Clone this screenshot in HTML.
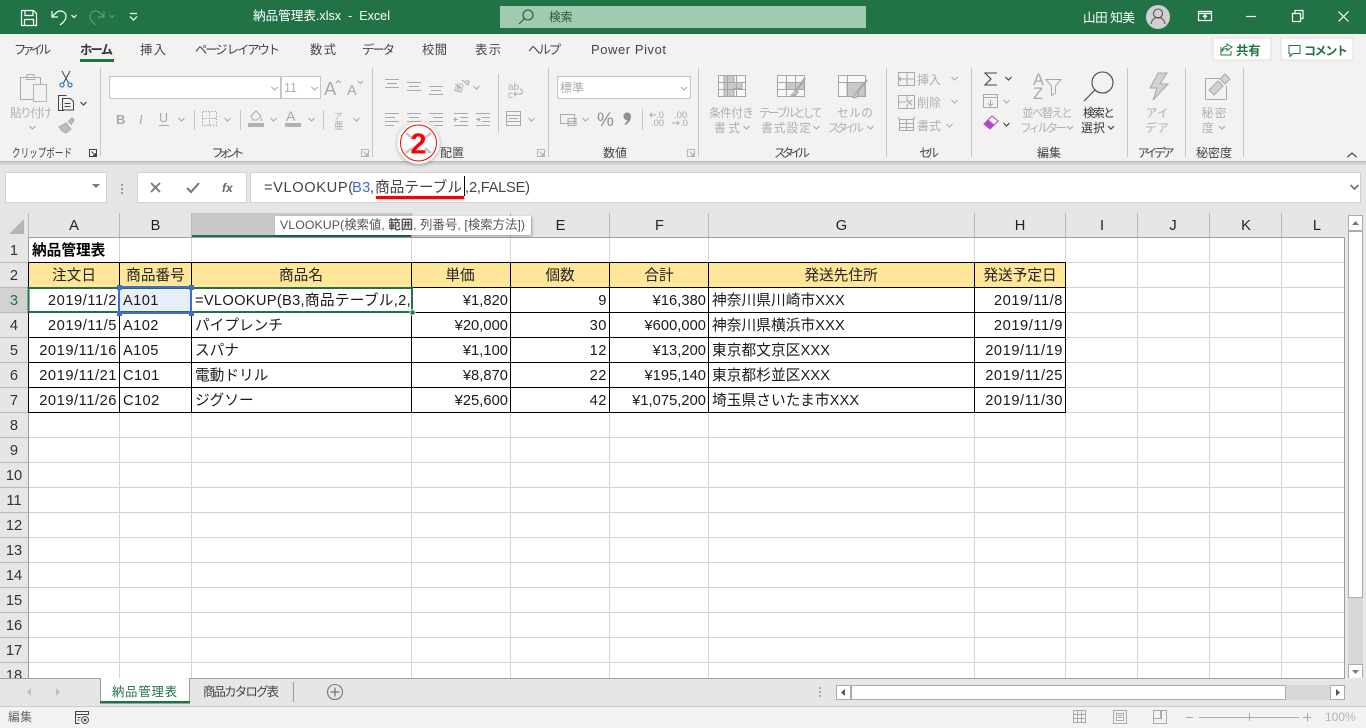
<!DOCTYPE html>
<html lang="ja"><head><meta charset="utf-8"><title>納品管理表.xlsx - Excel</title>
<style>
html,body{margin:0;padding:0;width:1366px;height:728px;overflow:hidden;background:#e6e6e6}
svg{display:block;position:absolute;left:0;top:0}
text{font-family:"Liberation Sans","Noto Sans CJK JP",sans-serif;white-space:pre}
.c{font-size:14.67px;fill:#1a1a1a}
.n{font-size:14.67px;fill:#1a1a1a;text-anchor:end;letter-spacing:.55px}
.m{font-size:14.67px;fill:#1a1a1a;text-anchor:end;letter-spacing:.05px}
.h{font-size:14.67px;fill:#222;text-anchor:middle}
.r{font-size:14.67px;fill:#333;text-anchor:middle}
.t{font-size:12.3px;fill:#444}
.g{font-size:12px;fill:#444;text-anchor:middle}
.d{font-size:11.7px;fill:#b0b0b0}
.dm{font-size:11.7px;fill:#b0b0b0;text-anchor:middle}
.i{fill:none;stroke:#a9a9a9;stroke-width:1}
.k{fill:none;stroke:#444;stroke-width:1}
.w{fill:none;stroke:#fff;stroke-width:1.2}
.ch{fill:none;stroke:#a9a9a9;stroke-width:1.1}
.chd{fill:none;stroke:#444;stroke-width:1.2}
</style></head><body>
<svg width="1366" height="728" viewBox="0 0 1366 728" xmlns="http://www.w3.org/2000/svg">
<defs>
<filter id="sh" x="-10%" y="-30%" width="120%" height="170%"><feDropShadow dx="1" dy="1" stdDeviation="1.2" flood-color="#000" flood-opacity=".35"/></filter>
<filter id="sh2" x="-30%" y="-30%" width="160%" height="160%"><feDropShadow dx="0" dy="1" stdDeviation="2" flood-color="#000" flood-opacity=".3"/></filter>
<linearGradient id="rs" x1="0" y1="0" x2="0" y2="1"><stop offset="0" stop-color="#bdbdbd"/><stop offset="1" stop-color="#e6e6e6"/></linearGradient>
</defs>
<!-- backgrounds -->
<rect width="1366" height="728" fill="#e6e6e6"/>
<rect width="1366" height="34" fill="#217346"/>
<rect y="34" width="1366" height="127" fill="#f3f2f1"/>
<rect y="161" width="1366" height="5" fill="url(#rs)"/>
<!-- title bar -->
<g class="w" fill="none" stroke="#fff">
<path class="w" d="M21.5 10.5h12l3 3v12h-15zM25 10.5v5h8v-5M24.5 25.5v-6h9v6"/>
<path class="w" stroke-width="1.3" d="M52 11v6h6M52 16.5l5-4.5c4-2.5 9 0 9 4.500 0 3.500-2.500 6-6 8.500"/>
<path class="w" d="M71.500 15l2.500 2.500 2.500-2.500"/>
</g>
<g fill="none" stroke="#5d9a79" stroke-width="1.2"><path d="M104 11v6h-6M104 16.500l-5-4.500c-4-2.500-9 0-9 4.500 0 3.500 2.500 6 6 8.500"/><path d="M109.500 15l2.500 2.500 2.500-2.500"/></g>
<path class="w" d="M130 13.500h7M130 16.500l3.500 3.500 3.500-3.500"/>
<text x="253" y="20" font-size="12.6" fill="#fff" textLength="137" lengthAdjust="spacing">納品管理表.xlsx  -  Excel</text>
<rect x="500" y="6" width="366" height="22" fill="#a0cbb1"/>
<g fill="none" stroke="#1e5c39" stroke-width="1.1"><circle cx="528" cy="15" r="5"/><path d="M524.500 18.500l-5.500 5.500"/></g>
<text x="549" y="21" font-size="11.700" fill="#1e5c39">検索</text>
<text x="1083" y="22" font-size="12.600" fill="#fff" textLength="52">山田 知美</text>
<circle cx="1158" cy="17" r="12" fill="#d0d0d0"/>
<g fill="none" stroke="#555" stroke-width="1.1"><circle cx="1158" cy="13.500" r="4.500"/><path d="M1151 24c1-5 3.500-6.500 7-6.500s6 1.500 7 6.500"/></g>
<path class="w" d="M1198.500 11.500h13v9h-13zM1198.500 13.500h13M1205 19v-4M1203 17l2-2 2 2"/>
<path class="w" d="M1246 16.500h10"/>
<path class="w" d="M1292.500 13.500h8v8h-8zM1295 13v-2.500h8v8h-2.500"/>
<path class="w" d="M1338.500 11.500l10 10M1348.500 11.500l-10 10"/>
<!-- tabs -->
<text class="t" x="14" y="54" textLength="37">ファイル</text>
<text class="t" x="80" y="54" textLength="33" font-weight="700" style="fill:#333">ホーム</text>
<rect x="80" y="59" width="34" height="3" fill="#217346"/>
<text class="t" x="140" y="54" textLength="26">挿入</text>
<text class="t" x="195" y="54" textLength="85">ページ レイアウト</text>
<text class="t" x="310" y="54" textLength="26">数式</text>
<text class="t" x="362" y="54" textLength="33">データ</text>
<text class="t" x="422" y="54" textLength="25">校閲</text>
<text class="t" x="475" y="54" textLength="26">表示</text>
<text class="t" x="528" y="54" textLength="33">ヘルプ</text>
<text class="t" x="591" y="54" textLength="75" style="font-size:13px">Power Pivot</text>
<!-- share/comment -->
<rect x="1213" y="38" width="58" height="22" fill="#fff" stroke="#e1dfdd"/>
<path d="M1221 47v8h10v-4M1227 44l5 3-5 3.500v-2c-2.500 0-4 1-5 3 0-3 2-5 5-5.500z" fill="none" stroke="#217346"/>
<text x="1236" y="55" font-size="12.300" font-weight="700" fill="#217346">共有</text>
<rect x="1281" y="38" width="72" height="22" fill="#fff" stroke="#e1dfdd"/>
<path d="M1289 45.500h11v8h-7l-3 3v-3h-1z" fill="none" stroke="#217346"/>
<text x="1304" y="55" font-size="12" font-weight="700" fill="#217346" textLength="44">コメント</text>
<!-- group separators -->
<g stroke="#c8c6c4"><path d="M100.500 68v89M372.500 68v89M548.500 68v89M698.500 68v89M886.500 68v89M971.500 68v89M1127.500 68v89M1185.500 68v89M1243.500 68v89M498.500 74v59M642.500 109v21M194.500 110v20M240.500 110v20M323.500 110v20"/></g>
<!-- clipboard -->
<g class="i" fill="none" stroke="#b4b4b4"><path class="i" d="M20.500 77.500h20v22h-20zM27 77.500v-3h7v3M25.500 79.500h10" /><rect x="33.500" y="84.500" width="13" height="17" fill="#f3f2f1" stroke="#b4b4b4"/></g>
<text class="d" x="10" y="117" textLength="42">貼り付け</text>
<path class="ch" d="M29.500 126l3 3 3-3"/>
<g fill="none" stroke="#444" stroke-width="1"><path d="M62 71l6.500 12M70 71l-6.500 12"/></g>
<circle cx="62" cy="85" r="2" fill="none" stroke="#2b88d8" stroke-width="1.300"/><circle cx="70" cy="85" r="2" fill="none" stroke="#2b88d8" stroke-width="1.300"/>
<g class="k"><path class="k" d="M64 110.500h-5.500v-15h8M62.500 98.500h8l3 3v8.500h-11zM64.500 103.500h6M64.500 106.500h6"/></g>
<path class="chd" d="M80.500 102l3 3 3-3"/>
<path d="M59 127l7-4 5 6-5 4c-2-.5-5-3-7-6zM68 122l4-4 2 2-3 5" fill="#bdbdbd" stroke="#a6a6a6"/>
<text class="g" x="42" y="157" textLength="60" lengthAdjust="spacingAndGlyphs" transform="translate(0 0)" text-anchor="middle">クリップボード</text>
<path class="k" stroke="#555" d="M89.500 149.500h7v7h-7zM91.500 151.500l4 4M95.500 153v2.500h-2.500"/>
<!-- font -->
<rect x="109.500" y="76.500" width="171" height="22" fill="#fff" stroke="#c6c6c6"/>
<rect x="281.500" y="76.500" width="39" height="22" fill="#fff" stroke="#c6c6c6"/>
<text class="d" x="284" y="92" style="font-size:12.500px">11</text>
<path class="ch" d="M271.500 87l3 3 3-3M311.500 87l3 3 3-3"/>
<text x="324" y="95" font-size="18.500" fill="#a9a9a9">A</text><path class="ch" d="M336 83l2.500-2.500 2.500 2.500"/>
<text x="347" y="95" font-size="14.500" fill="#a9a9a9">A</text><path class="ch" d="M358 81l2.500 2.500 2.500-2.500"/>
<text x="116" y="124" font-size="13" font-weight="700" fill="#a9a9a9">B</text>
<text x="139" y="124" font-size="13" font-style="italic" fill="#a9a9a9" font-family="Liberation Serif">I</text>
<text x="159" y="122" font-size="12.500" fill="#a9a9a9">U</text><path class="i" d="M159 125.500h10"/>
<path class="ch" d="M178.500 118l3 3 3-3M224.500 118l3 3 3-3M270.500 118l3 3 3-3M308.500 118l3 3 3-3M353.500 118l3 3 3-3"/>
<path class="i" stroke-dasharray="1.500 1.500" d="M202.500 111.500h14v14h-14zM209.500 111.500v14M202.500 118.500h14"/>
<path d="M251 116l5-5 5 5-4 4h-4zM261 118l1 3" fill="none" stroke="#a9a9a9"/><rect x="248" y="123" width="16" height="4" fill="#b3b0ad"/>
<text x="286" y="121" font-size="14" fill="#a9a9a9">A</text><rect x="285" y="123" width="16" height="4" fill="#b3b0ad"/>
<text x="334" y="119" font-size="8.500" fill="#a9a9a9">ア</text><text x="334" y="129" font-size="9.500" fill="#a9a9a9">亜</text>
<text class="g" x="228" y="157" textLength="33">フォント</text>
<path d="M361.500 149.500h7v7h-7zM363.500 151.500l4 4M367.500 153v2.500h-2.500" fill="none" stroke="#b5b5b5"/>
<!-- alignment -->
<path class="i" d="M385 79.500h14M387 83.500h10M385 87.500h14M407 82.500h14M409 86.500h10M407 90.500h14M429 86.500h14M431 90.500h10M429 94.500h14"/>
<path class="i" d="M455 84l8 6M462 80l6 5 1-4-4 0M454 90l8 2"/>
<text class="d" x="453" y="90" style="font-size:9px" transform="rotate(-35 458 86)">ab</text>
<path class="ch" d="M473.500 86l3 3 3-3"/>
<path class="i" d="M385 113.500h14M385 117.500h10M385 121.500h14M385 125.500h9M407 113.500h14M409 117.500h10M407 121.500h14M409 125.500h10M429 113.500h14M433 117.500h10M429 121.500h14M434 125.500h9M454 113.500h14M460 117.500h8M460 121.500h8M454 125.500h14M458 119.500h-4M456 117.500l-2 2 2 2M476 113.500h14M482 117.500h8M482 121.500h8M476 125.500h14M476 119.500h4M478 117.500l2 2-2 2"/>
<text class="d" x="508" y="90" style="font-size:10px">ab</text>
<text class="d" x="508" y="98" style="font-size:10px">c</text><path class="i" d="M514 94h6c3 0 3-4 0-5M514 94l2-2M514 94l2 2"/>
<path class="i" d="M506.500 111.500h14v14h-14zM506.500 115.500h14M506.500 121.500h14M509 118.500h9"/>
<path class="ch" d="M528.500 118l3 3 3-3"/>
<text class="g" x="452" y="157">配置</text>
<path d="M537.500 149.500h7v7h-7zM539.500 151.500l4 4M543.500 153v2.500h-2.500" fill="none" stroke="#b5b5b5"/>
<!-- number -->
<rect x="557.500" y="76.500" width="133" height="22" fill="#fff" stroke="#c6c6c6"/>
<text class="d" x="560" y="92" style="font-size:12px;fill:#a9a9a9">標準</text>
<path class="ch" d="M681 87l3 3 3-3"/>
<path class="i" d="M560.500 114.500h14v9h-14zM568 118.500h8v7h-8zM568 121.500h8"/>
<path class="ch" d="M582.500 118l3 3 3-3"/>
<text x="597" y="126" font-size="19" fill="#909090">%</text>
<path d="M627 112.500c2.500 0 4 1.700 4 4 0 3.500-2.500 6.500-5.500 8.500l-1-1c1.500-1.300 2.500-2.700 2.800-4-2 .2-3.800-1.400-3.800-3.600 0-2.200 1.500-3.900 3.500-3.900z" fill="#909090"/>
<text x="656" y="118" font-size="9.500" fill="#a9a9a9">.0</text><text x="651" y="126" font-size="9.500" fill="#a9a9a9">.00</text><path class="i" d="M656 115h-6M652 113l-2 2 2 2"/>
<text x="674" y="118" font-size="9.500" fill="#a9a9a9">.00</text><text x="680" y="126" font-size="9.500" fill="#a9a9a9">.0</text><path class="i" d="M672 123h7M677 121l2 2-2 2"/>
<text class="g" x="615" y="157">数値</text>
<path d="M687.500 149.500h7v7h-7zM689.500 151.500l4 4M693.500 153v2.500h-2.500" fill="none" stroke="#b5b5b5"/>
<!-- styles -->
<g fill="none" stroke="#a6a6a6"><rect x="718.500" y="75.500" width="27" height="21" fill="#f8f8f8"/><path fill="#c8c8c8" d="M724 75.500h10v7h8v6h-8v8h-10z"/><path d="M718.500 82.500h27M718.500 89.500h27M727.500 75.500v21M736.500 75.500v21"/></g>
<g fill="none" stroke="#a6a6a6"><rect x="777.500" y="75.500" width="27" height="21" fill="#f8f8f8"/><path fill="#c8c8c8" d="M786 82.500h18v7h-18z"/><path d="M777.500 82.500h27M777.500 89.500h27M786.500 75.500v21M795.500 75.500v21"/><path stroke-width="2" d="M805 78l-9 13"/><path fill="#c8c8c8" d="M791 95c3-1 4-4 4-5l3 2c-1 3-4 5-7 3z"/></g>
<g fill="none" stroke="#a6a6a6"><rect x="838.500" y="75.500" width="27" height="21" fill="#f8f8f8"/><path fill="#c8c8c8" d="M847 82.500h18v14h-18z"/><path d="M838.500 82.500h27M847.500 75.500v21"/><path stroke-width="2" d="M867 80l-10 12"/><path fill="#c8c8c8" d="M852 97c3-1 4-4 4-5l3 2c-1 3-4 5-7 3z"/></g>
<text class="d" x="709" y="117" textLength="45">条件付き</text>
<text class="d" x="714" y="132" textLength="26">書式</text><path class="ch" d="M743.500 126l3 3 3-3"/>
<text class="d" x="759" y="117" textLength="64">テーブルとして</text>
<text class="d" x="761" y="132" textLength="50">書式設定</text><path class="ch" d="M813.500 126l3 3 3-3"/>
<text class="d" x="837" y="117" textLength="36">セルの</text>
<text class="d" x="828" y="132" textLength="36">スタイル</text><path class="ch" d="M867.500 126l3 3 3-3"/>
<text class="g" x="792" y="157" textLength="36">スタイル</text>
<!-- cells -->
<path class="i" d="M898.500 72.500h16v13h-16zM898.500 79h16M907 72.500v13M903 79h-4M901 77l-2 2 2 2"/>
<text class="d" x="917" y="84" style="font-size:12px">挿入</text>
<path class="ch" d="M951.500 77l3 3 3-3"/>
<path class="i" d="M898.500 95.500h16v13h-16zM898.500 102h8M907 95.500v6M907 108.500v-4M907 100l5 5M912 100l-5 5"/>
<text class="d" x="917" y="107" style="font-size:12px">削除</text>
<path class="ch" d="M951.500 100l3 3 3-3"/>
<path class="i" d="M899.500 119.500h14v11h-14zM899.500 123.500h14M899.500 127.500h14M906.500 119.500v11M899 116.500v3M914 116.500v3"/>
<text class="d" x="917" y="130" style="font-size:12px">書式</text>
<path class="ch" d="M946.500 124l3 3 3-3"/>
<text class="g" x="929" y="157" textLength="20">セル</text>
<!-- editing -->
<path fill="none" stroke="#444" stroke-width="1.100" d="M997 73h-12l6 6-6 6h12"/>
<path class="chd" d="M1005.500 77l3 3 3-3"/>
<path class="i" d="M983.500 94.500h14v13h-14zM983.500 97.500h14M990.500 100v6M988 103.500l2.500 2.500 2.500-2.500"/>
<path class="ch" d="M1003.500 100l3 3 3-3"/>
<path d="M984 124l8-8 6 5-8 8z" fill="#b146c2" stroke="#b146c2"/><path d="M988 120l4-4 6 5-4 4z" fill="#fff" stroke="#b146c2"/>
<path class="chd" d="M1003.500 123l3 3 3-3"/>
<text x="1033" y="85" font-size="16.500" fill="#a9a9a9">A</text><text x="1033" y="99" font-size="16.500" fill="#a9a9a9">Z</text>
<path class="i" d="M1046 79.500h15l-5.500 6.500v7l-4 2.500v-9.500z"/>
<text class="d" x="1022" y="117" textLength="51">並べ替えと</text>
<text class="d" x="1020" y="132" textLength="47">フィルター</text><path class="ch" d="M1067 126l3 3 3-3"/>
<g fill="none" stroke="#444" stroke-width="1.100"><circle cx="1102.500" cy="82.500" r="10.500"/><path d="M1095 90l-11 11"/></g>
<text x="1083" y="117" font-size="11.700" fill="#333" textLength="32">検索と</text>
<text x="1081" y="132" font-size="11.700" fill="#333" textLength="24">選択</text><path class="chd" d="M1108 126l3 3 3-3"/>
<text class="g" x="1049" y="157">編集</text>
<!-- ideas -->
<path d="M1158 73h9l-7 11h8l-15 16 4-12h-7z" fill="#d2d2d2" stroke="#a9a9a9"/>
<text class="dm" x="1157" y="117">アイ</text><text class="dm" x="1157" y="132">デア</text>
<text class="g" x="1156" y="157" textLength="37">アイデア</text>
<!-- sensitivity -->
<path class="i" d="M1205.500 78.500h14M1205.500 78.500v21h21v-14"/>
<path d="M1209 90l9-9 5 5-9 9z" fill="#d2d2d2" stroke="#a9a9a9"/><path d="M1220 79l5-5 5 5-5 5z" fill="#d2d2d2" stroke="#a9a9a9"/>
<text class="dm" x="1214" y="117" textLength="25">秘密</text>
<text class="d" x="1202" y="132">度</text><path class="ch" d="M1219 126l3 3 3-3"/>
<text class="g" x="1214" y="157" textLength="36">秘密度</text>
<path fill="none" stroke="#444" stroke-width="1.200" d="M1347.500 157l4.500-4 4.500 4"/>
<!-- formula bar -->
<rect x="5.500" y="172.500" width="101" height="30" fill="#fff" stroke="#d0d0d0"/>
<path d="M92 184h8l-4 4z" fill="#777"/>
<g fill="#999"><rect x="121" y="184" width="2" height="2"/><rect x="121" y="188" width="2" height="2"/><rect x="121" y="192" width="2" height="2"/></g>
<rect x="137.500" y="172.500" width="109" height="30" fill="#fff" stroke="#d0d0d0"/>
<path d="M151 183l9 9M160 183l-9 9" stroke="#777" stroke-width="1.800" fill="none"/>
<path d="M187 188l4 4 8-9" stroke="#777" stroke-width="2" fill="none"/>
<text x="222" y="192" font-size="12" font-style="italic" font-weight="700" fill="#666" font-family="Liberation Serif">fx</text>
<rect x="250.500" y="172.500" width="1110" height="30" fill="#fff" stroke="#d0d0d0"/>
<path d="M1350.500 185l4 4 4-4" fill="none" stroke="#777" stroke-width="1.800"/>
<text x="264" y="192" class="c" style="fill:#444;letter-spacing:.6px">=VLOOKUP(</text>
<text x="352" y="192" class="c" style="fill:#3f6fc4;letter-spacing:.4px">B3</text>
<text x="370" y="192" class="c" style="fill:#444">,</text>
<text x="375" y="192" class="c" style="fill:#444">商品テーブル</text>
<rect x="464" y="176" width="1" height="20" fill="#000"/>
<text x="465" y="192" class="c" style="fill:#444">,</text>
<text x="469" y="192" class="c" style="fill:#444" textLength="61">2,FALSE)</text>
<rect x="376" y="196" width="88" height="3" fill="#f00" filter="url(#sh)"/>
<!-- sheet -->
<rect x="0" y="237" width="28" height="441" fill="#e6e6e6"/>
<rect x="28" y="237" width="1316" height="441" fill="#fff"/>
<rect x="191" y="213" width="220" height="23" fill="#c8c8c8"/>
<rect x="191" y="235" width="220" height="2" fill="#217346"/>
<rect x="0" y="288" width="27" height="24" fill="#d2d2d2"/>
<path d="M24 219v15h-15z" fill="#b5b5b5"/>
<!-- gridlines -->
<path stroke="#d4d4d4" fill="none" d="M119.500 237v441M191.500 237v441M411.500 237v441M510.500 237v441M609.500 237v441M708.500 237v441M974.500 237v441M1065.500 237v441M1137.500 237v441M1209.500 237v441M1281.500 237v441M28 262.500h1316M28 287.500h1316M28 312.500h1316M28 337.500h1316M28 362.500h1316M28 387.500h1316M28 412.500h1316M28 437.500h1316M28 462.500h1316M28 487.500h1316M28 512.500h1316M28 537.500h1316M28 562.500h1316M28 587.500h1316M28 612.500h1316M28 637.500h1316M28 662.500h1316"/>
<path stroke="#b8b8b8" fill="none" d="M28.500 213v24M119.500 213v24M191.500 213v24M411.500 213v24M510.500 213v24M609.500 213v24M708.500 213v24M974.500 213v24M1065.500 213v24M1137.500 213v24M1209.500 213v24M1281.500 213v24M0 262.500h28M0 287.500h28M0 312.500h28M0 337.500h28M0 362.500h28M0 387.500h28M0 412.500h28M0 437.500h28M0 462.500h28M0 487.500h28M0 512.500h28M0 537.500h28M0 562.500h28M0 587.500h28M0 612.500h28M0 637.500h28M0 662.500h28"/>
<path stroke="#9e9e9e" fill="none" d="M28 237.500h1317M28.500 237v441M1344.500 237v441"/>
<!-- yellow header -->
<rect x="28" y="262" width="1038" height="26" fill="#ffe699"/>
<rect x="119" y="288" width="72" height="25" fill="#e8eef9"/>
<path stroke="#000" fill="none" d="M28.500 262.500h1037M28.500 287.500h1037M28.500 312.500h1037M28.500 337.500h1037M28.500 362.500h1037M28.500 387.500h1037M28.500 412.500h1037M28.500 262v151M119.500 262v151M191.500 262v151M411.500 262v151M510.500 262v151M609.500 262v151M708.500 262v151M974.500 262v151M1065.500 262v151"/>
<!-- column labels -->
<text class="h" x="74" y="230">A</text><text class="h" x="155.500" y="230">B</text><text class="h" x="560.500" y="230">E</text><text class="h" x="659.500" y="230">F</text><text class="h" x="841.500" y="230">G</text><text class="h" x="1020" y="230">H</text><text class="h" x="1102" y="230">I</text><text class="h" x="1173" y="230">J</text><text class="h" x="1246" y="230">K</text><text class="h" x="1317" y="230">L</text>
<!-- row labels -->
<text class="r" x="14" y="255">1</text><text class="r" x="14" y="280">2</text><text class="r" x="14" y="305" style="fill:#217346">3</text><text class="r" x="14" y="330">4</text><text class="r" x="14" y="355">5</text><text class="r" x="14" y="380">6</text><text class="r" x="14" y="405">7</text><text class="r" x="14" y="430">8</text><text class="r" x="14" y="455">9</text><text class="r" x="14" y="480">10</text><text class="r" x="14" y="505">11</text><text class="r" x="14" y="530">12</text><text class="r" x="14" y="555">13</text><text class="r" x="14" y="580">14</text><text class="r" x="14" y="605">15</text><text class="r" x="14" y="630">16</text><text class="r" x="14" y="655">17</text><text class="r" x="14" y="680">18</text>
<!-- cells text -->
<text class="c" x="32" y="255" font-weight="700" style="fill:#000">納品管理表</text>
<text class="h" x="74" y="280">注文日</text><text class="h" x="155.500" y="280">商品番号</text><text class="h" x="301" y="280">商品名</text><text class="h" x="460" y="280">単価</text><text class="h" x="560" y="280">個数</text><text class="h" x="659" y="280">合計</text><text class="h" x="841" y="280">発送先住所</text><text class="h" x="1020" y="280">発送予定日</text>

<text class="n" x="117" y="305">2019/11/2</text><text class="c" x="123" y="305" style="letter-spacing:.4px">A101</text>
<text class="c" x="195" y="305" style="letter-spacing:.3px">=VLOOKUP(B3,商品テーブル,2,</text>
<text class="m" x="508" y="305">¥1,820</text><text class="n" x="607" y="305">9</text><text class="m" x="706" y="305">¥16,380</text><text class="c" x="712" y="305" style="letter-spacing:.1px">神奈川県川崎市XXX</text><text class="n" x="1063" y="305">2019/11/8</text>

<text class="n" x="117" y="330">2019/11/5</text><text class="c" x="123" y="330" style="letter-spacing:.4px">A102</text><text class="c" x="195" y="330">パイプレンチ</text>
<text class="m" x="508" y="330">¥20,000</text><text class="n" x="607" y="330">30</text><text class="m" x="706" y="330">¥600,000</text><text class="c" x="712" y="330" style="letter-spacing:.1px">神奈川県横浜市XXX</text><text class="n" x="1063" y="330">2019/11/9</text>

<text class="n" x="117" y="355">2019/11/16</text><text class="c" x="123" y="355" style="letter-spacing:.4px">A105</text><text class="c" x="195" y="355">スパナ</text>
<text class="m" x="508" y="355">¥1,100</text><text class="n" x="607" y="355">12</text><text class="m" x="706" y="355">¥13,200</text><text class="c" x="712" y="355" style="letter-spacing:.1px">東京都文京区XXX</text><text class="n" x="1063" y="355">2019/11/19</text>

<text class="n" x="117" y="380">2019/11/21</text><text class="c" x="123" y="380" style="letter-spacing:.4px">C101</text><text class="c" x="195" y="380">電動ドリル</text>
<text class="m" x="508" y="380">¥8,870</text><text class="n" x="607" y="380">22</text><text class="m" x="706" y="380">¥195,140</text><text class="c" x="712" y="380" style="letter-spacing:.1px">東京都杉並区XXX</text><text class="n" x="1063" y="380">2019/11/25</text>

<text class="n" x="117" y="405">2019/11/26</text><text class="c" x="123" y="405" style="letter-spacing:.4px">C102</text><text class="c" x="195" y="405">ジグソー</text>
<text class="m" x="508" y="405">¥25,600</text><text class="n" x="607" y="405">42</text><text class="m" x="706" y="405">¥1,075,200</text><text class="c" x="712" y="405" style="letter-spacing:.1px">埼玉県さいたま市XXX</text><text class="n" x="1063" y="405">2019/11/30</text>
<!-- selection -->
<path d="M28 288.500h384M28 312.500h384" stroke="#217346" stroke-width="2" fill="none" transform="translate(0 -.5)"/>
<path d="M28.500 287v26M412 287v26" stroke="#217346" stroke-width="2" fill="none"/>
<rect x="410" y="310" width="5" height="5" fill="#217346" stroke="#fff" stroke-width="1"/>
<rect x="119" y="287" width="72" height="26" fill="none" stroke="#3b6fc9" stroke-width="2"/>
<g fill="#3b6fc9"><rect x="117" y="285" width="5" height="5"/><rect x="189" y="285" width="5" height="5"/><rect x="117" y="311" width="5" height="5"/><rect x="189" y="311" width="5" height="5"/></g>
<!-- tooltip -->
<rect x="275" y="216" width="256" height="19" fill="#fff" filter="url(#sh)"/>
<text x="280" y="229" font-size="12.300" fill="#555" textLength="245">VLOOKUP(検索値, <tspan font-weight="700">範囲</tspan>, 列番号, [検索方法])</text>
<!-- vertical scrollbar -->
<rect x="1345" y="213" width="21" height="466" fill="#e6e6e6"/>
<rect x="1348" y="232" width="15" height="432" fill="#d8d8d8"/>
<rect x="1348.500" y="215.500" width="14" height="15" fill="#fff" stroke="#ababab"/>
<path d="M1352 225h7l-3.500-4z" fill="#777"/>
<rect x="1348.500" y="231.500" width="14" height="366" fill="#fff" stroke="#ababab"/>
<rect x="1348.500" y="664.500" width="14" height="14" fill="#fff" stroke="#ababab"/>
<path d="M1352 670h7l-3.500 4z" fill="#777"/>
<!-- tab bar -->
<rect x="0" y="678" width="1366" height="29" fill="#e6e6e6"/>
<path stroke="#9e9e9e" d="M0 678.500h1345"/>
<rect x="100.500" y="678" width="89" height="24" fill="#fff"/>
<path stroke="#9e9e9e" fill="none" d="M100.500 678v24M189.500 678v24"/>
<rect x="100" y="701" width="90" height="2.500" fill="#217346"/>
<text x="112" y="696" font-size="12.300" fill="#217346" textLength="65">納品管理表</text>
<text x="203" y="696" font-size="12.300" fill="#444" textLength="76">商品カタログ表</text>
<path stroke="#9e9e9e" d="M293.500 682v20"/>
<path d="M31 688v8l-4-4z" fill="#c2c2c2"/><path d="M56 688v8l4-4z" fill="#c2c2c2"/>
<circle cx="335" cy="692" r="7.500" fill="none" stroke="#777" stroke-width="1.100"/><path d="M335 687.500v9M330.500 692h9" stroke="#777" stroke-width="1.300"/>
<g fill="#aaa"><rect x="819" y="687" width="2" height="2"/><rect x="819" y="691" width="2" height="2"/><rect x="819" y="695" width="2" height="2"/></g>
<rect x="836" y="685" width="509" height="15" fill="#d8d8d8"/>
<rect x="836.500" y="685.500" width="14" height="14" fill="#fff" stroke="#ababab"/>
<path d="M845 689v7l-4-3.500z" fill="#555"/>
<rect x="851.500" y="685.500" width="434" height="14" fill="#fff" stroke="#ababab"/>
<rect x="1330.500" y="685.500" width="14" height="14" fill="#fff" stroke="#ababab"/>
<path d="M1336 689v7l4-3.500z" fill="#555"/>
<!-- status -->
<rect y="706" width="1366" height="22" fill="#f3f2f1"/>
<path stroke="#cfcdcb" d="M0 706.500h1366"/>
<text x="8" y="721" font-size="11.700" fill="#666" textLength="24">編集</text>
<path class="k" stroke="#666" d="M75.500 711.500h13v3h-13zM75.500 714.500v9h4M77.500 717.500h3M77.500 720h2"/>
<circle cx="85" cy="720" r="3.500" fill="none" stroke="#555"/><circle cx="85" cy="720" r="1.500" fill="#555"/>
<path class="i" d="M1073.500 710.500h12v12h-12zM1077.500 710.500v12M1081.500 710.500v12M1073.500 714.500h12M1073.500 718.500h12"/>
<path class="i" d="M1113.500 710.500h13v13h-13zM1116.500 713.500h7v7h-7zM1118 715.500h4M1118 717.500h4"/>
<path class="i" d="M1153.500 710.500h13v13h-13zM1153.500 718.500h8v-8M1160.500 710.500v8"/>
<path stroke="#a9a9a9" fill="none" d="M1186 717.500h7M1199 717.500h100M1249.500 713v8M1303 717.500h8M1307.500 713.500v8"/>
<text x="1325" y="721" font-size="12" fill="#b5b5b5">100%</text>
<!-- callout -->
<circle cx="418.500" cy="143" r="21" fill="#fff" filter="url(#sh2)"/>
<circle cx="418.500" cy="143" r="18" fill="#fff" stroke="#f00" stroke-width="1"/>
<path d="M406 133l6 5M431 133l-6 5M406 153l6-5M431 153l-6-5" stroke="#c9c9c9" stroke-width="2.500" fill="none"/>
<text x="418.500" y="153.500" font-size="29" font-weight="700" fill="#f00" text-anchor="middle">2</text>
</svg>
</body></html>
